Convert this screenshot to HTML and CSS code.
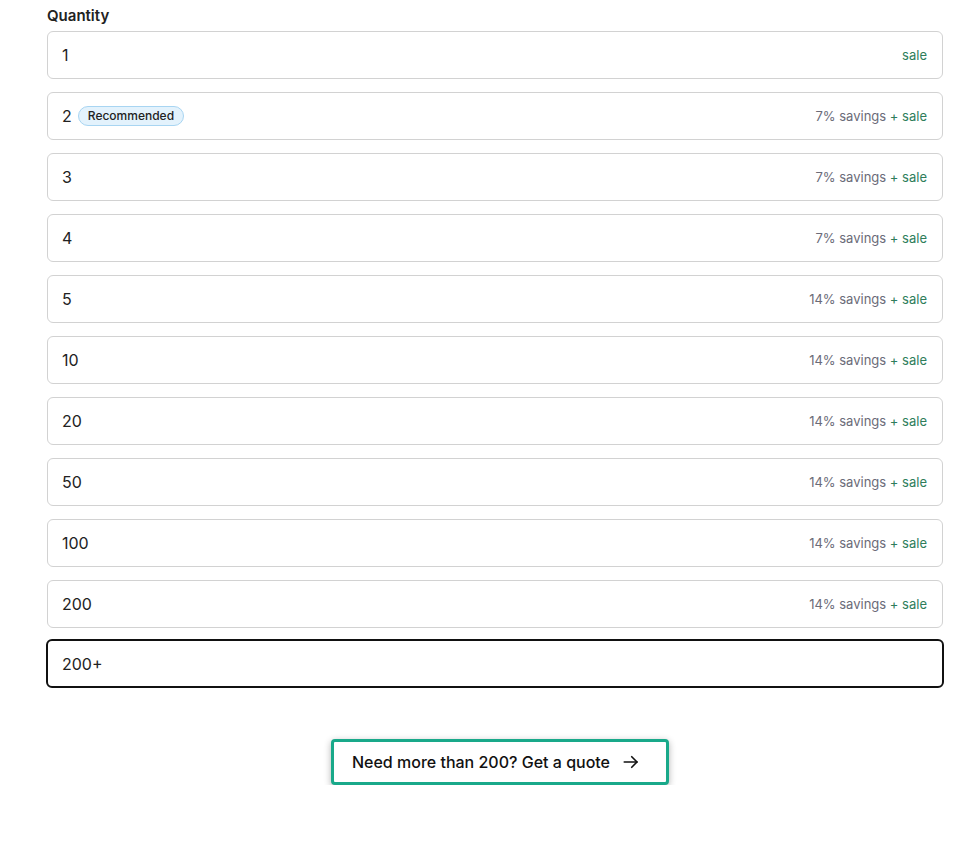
FILE: index.html
```html
<!DOCTYPE html>
<html>
<head>
<meta charset="utf-8">
<link rel="stylesheet" href="styles.css">
</head>
<body>
<div class="wrap">
  <div class="label">Quantity</div>
  <div class="options">
    <div class="opt"><span class="qty">1</span><span class="note"><span class="sale">sale</span></span></div>
    <div class="opt"><span class="qty">2 <span class="badge">Recommended</span></span><span class="note">7% savings <span class="sale">+ sale</span></span></div>
    <div class="opt"><span class="qty">3</span><span class="note">7% savings <span class="sale">+ sale</span></span></div>
    <div class="opt"><span class="qty">4</span><span class="note">7% savings <span class="sale">+ sale</span></span></div>
    <div class="opt"><span class="qty">5</span><span class="note">14% savings <span class="sale">+ sale</span></span></div>
    <div class="opt"><span class="qty">10</span><span class="note">14% savings <span class="sale">+ sale</span></span></div>
    <div class="opt"><span class="qty">20</span><span class="note">14% savings <span class="sale">+ sale</span></span></div>
    <div class="opt"><span class="qty">50</span><span class="note">14% savings <span class="sale">+ sale</span></span></div>
    <div class="opt"><span class="qty">100</span><span class="note">14% savings <span class="sale">+ sale</span></span></div>
    <div class="opt"><span class="qty">200</span><span class="note">14% savings <span class="sale">+ sale</span></span></div>
    <div class="opt selected"><span class="qty">200+</span></div>
  </div>
  <div class="cta-row">
    <button class="cta">Need more than 200? Get a quote
      <svg width="18" height="18" viewBox="0 0 24 24" fill="none" stroke="#111" stroke-width="2.2" stroke-linecap="round" stroke-linejoin="round"><path d="M3 12h17"/><path d="M13 5l7 7-7 7"/></svg>
    </button>
  </div>
</div>
</body>
</html>
```
FILE: styles.css
```css
html, body { margin: 0; padding: 0; background: #fff; }
body { font-family: Inter, "Noto Sans", sans-serif; color: #222; }
.wrap { margin-left: 47px; width: 896px; padding-top: 6px; }
.label { font-size: 15px; font-weight: 600; color: #222; line-height: 20px; margin-bottom: 5px; }
.options { display: flex; flex-direction: column; gap: 13px; }
.opt {
  height: 48px; box-sizing: border-box;
  border: 1px solid #d2d2d2; border-radius: 6px;
  display: flex; align-items: center; justify-content: space-between;
  padding: 0 15px 0 14px;
}
.opt.selected { border: 2px solid #111; padding-left: 14px; height: 49px; margin-left: -1px; margin-right: -1px; margin-top: -2px; }
.qty { font-size: 16px; color: #222; display: flex; align-items: center; gap: 6px; }
.badge {
  font-size: 12px; font-weight: 500; color: #222; background: #e3f2fc;
  border: 1px solid #a8d5f2; border-radius: 10px; padding: 0 9px; line-height: 18px;
}
.note { font-size: 13px; color: #6b6b78; }
.sale { color: #2e7d5b; }
.cta-row { display: flex; justify-content: center; margin-top: 51px; padding-left: 10px; }
.cta {
  font-family: inherit; font-size: 16px; font-weight: 500; color: #111;
  background: #fff; border: 3px solid #19a98a; border-radius: 4px;
  height: 46px; padding: 0 26px 0 18px;
  display: flex; align-items: center; gap: 12px;
  box-shadow: 0 2px 7px rgba(0,0,0,0.3);
}
```
